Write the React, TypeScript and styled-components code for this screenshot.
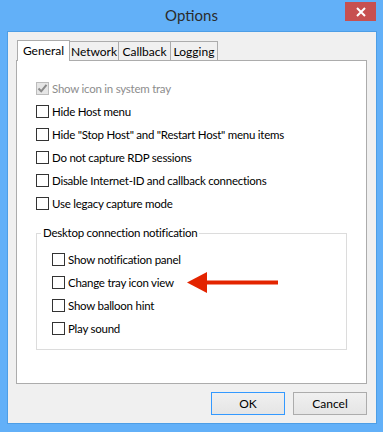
import React from 'react';
import styled, {createGlobalStyle} from "styled-components";

const GlobalStyle = createGlobalStyle`
  html, body {
    margin: 0;
    padding: 0;
  }
  body {
    font-family: "Segoe UI", Lato, "Noto Sans", sans-serif;
    font-size: 11px;
    color: #000;
  }
`

type OptionType = {
    label: string;
    checked?: boolean;
    disabled?: boolean;
    arrow?: boolean;
}

const mainOptions: OptionType[] = [
    {label: "Show icon in system tray", checked: true, disabled: true},
    {label: "Hide Host menu"},
    {label: "Hide \"Stop Host\" and \"Restart Host\" menu items"},
    {label: "Do not capture RDP sessions"},
    {label: "Disable Internet-ID and callback connections"},
    {label: "Use legacy capture mode"},
]

const notifyOptions: OptionType[] = [
    {label: "Show notification panel"},
    {label: "Change tray icon view", arrow: true},
    {label: "Show balloon hint"},
    {label: "Play sound"},
]

const tabs = [
    {title: "General", width: 53},
    {title: "Network", width: 50},
    {title: "Callback", width: 53},
    {title: "Logging", width: 48},
]

const Option = (props: OptionType) => {
    return (
        <Row>
            <Box $disabled={props.disabled}>
                {props.checked && (
                    <svg width="11" height="11" viewBox="0 0 11 11">
                        <path d="M1.5 5.5 L4.2 8.3 L9.5 1.8" fill="none" stroke="#8a8a8a" strokeWidth="2"/>
                    </svg>
                )}
            </Box>
            <Label $disabled={props.disabled}>{props.label}</Label>
            {props.arrow && (
                <Arrow width="92" height="21" viewBox="0 0 92 21">
                    <polygon points="0,10.5 20,0 20,21" fill="#e32400"/>
                    <rect x="18" y="8.5" width="73" height="4" fill="#e32400"/>
                </Arrow>
            )}
        </Row>
    );
};

export default function App() {
    return (
        <>
            <GlobalStyle/>
            <Frame>
                <TitleBar>
                    <span/>
                    <Title>Options</Title>
                    <CloseButton>
                        <svg width="10" height="10" viewBox="0 0 10 10">
                            <path d="M1 1 L9 9 M9 1 L1 9" stroke="#fff" strokeWidth="2"/>
                        </svg>
                    </CloseButton>
                </TitleBar>

                <Client>
                    <TabStrip>
                        {tabs.map((t, i) => (
                            <Tab key={t.title} $active={i === 0} $w={t.width}>{t.title}</Tab>
                        ))}
                    </TabStrip>

                    <Panel>
                        {mainOptions.map(o => <Option key={o.label} {...o}/>)}

                        <Group>
                            <Legend>Desktop connection notification</Legend>
                            {notifyOptions.map(o => <Option key={o.label} {...o}/>)}
                        </Group>
                    </Panel>

                    <Buttons>
                        <Button $default>OK</Button>
                        <Button>Cancel</Button>
                    </Buttons>
                </Client>
            </Frame>
        </>
    );
}


const Frame = styled.div`
  width: 383px;
  height: 432px;
  background: #62b0f8;
  display: flex;
  flex-direction: column;
  box-sizing: border-box;
`

const TitleBar = styled.div`
  height: 31px;
  display: grid;
  grid-template-columns: 1fr auto 1fr;
  align-items: start;
`

const Title = styled.div`
  font-size: 15px;
  color: #2b2b2b;
  padding-top: 5px;
  line-height: 20px;
`

const CloseButton = styled.div`
  justify-self: end;
  margin: 2px 7px 0 0;
  width: 31px;
  height: 19px;
  background: #c75050;
  display: flex;
  align-items: center;
  justify-content: center;
`

const Client = styled.div`
  flex: 1;
  margin: 0 6px 8px 7px;
  border: 1px solid #4d9ee6;
  background: #f0f0f0;
  padding: 8px 9px 8px 8px;
  display: flex;
  flex-direction: column;
`

const TabStrip = styled.div`
  display: flex;
  align-items: flex-end;
  padding-left: 1px;
  height: 20px;
  position: relative;
  z-index: 1;
`

const Tab = styled.div<{ $active?: boolean; $w: number }>`
  box-sizing: border-box;
  width: ${props => props.$w}px;
  height: ${props => props.$active ? 21 : 19}px;
  margin-bottom: ${props => props.$active ? -1 : 0}px;
  margin-left: -1px;
  border: 1px solid #acacac;
  border-bottom: none;
  background: ${props => props.$active ? "#fff" : "#f0f0f0"};
  display: flex;
  align-items: center;
  justify-content: center;
  padding-top: ${props => props.$active ? 0 : 1}px;
  font-size: 12px;
  line-height: 16px;

  &:first-child {
    margin-left: 0;
  }
`

const Panel = styled.div`
  flex: 1;
  background: #fff;
  border: 1px solid #acacac;
  padding: 16px 19px 0;
  display: flex;
  flex-direction: column;
`

const Row = styled.div`
  position: relative;
  height: 23px;
  display: flex;
  align-items: center;
`

const Box = styled.div<{ $disabled?: boolean }>`
  box-sizing: border-box;
  width: 13px;
  height: 13px;
  border: 1px solid ${props => props.$disabled ? "#bcbcbc" : "#333"};
  background: ${props => props.$disabled ? "#e6e6e6" : "#fff"};
  display: flex;
  align-items: center;
  justify-content: center;
  margin-right: 3px;
`

const Label = styled.span<{ $disabled?: boolean }>`
  color: ${props => props.$disabled ? "#8d8d8d" : "#000"};
  white-space: nowrap;
  font-size: 11.5px;
  letter-spacing: -0.25px;
`

const Arrow = styled.svg`
  position: absolute;
  left: 135px;
  top: 1px;
`

const Group = styled.fieldset`
  margin: 10px 0 0;
  border: 1px solid #dcdcdc;
  padding: 7px 15px 9px;
  display: flex;
  flex-direction: column;
`

const Legend = styled.legend`
  padding: 0 2px;
  margin-left: -11px;
  line-height: 16px;
  font-size: 11.5px;
  letter-spacing: -0.25px;
`

const Buttons = styled.div`
  display: flex;
  justify-content: flex-end;
  gap: 8px;
  margin-top: 8px;
`

const Button = styled.button<{ $default?: boolean }>`
  width: 74px;
  height: 23px;
  font: inherit;
  font-size: 12px;
  color: #000;
  border: 1px solid ${props => props.$default ? "#3399ff" : "#acacac"};
  background: linear-gradient(#f0f0f0, #e5e5e5);
  padding: 0;
`
